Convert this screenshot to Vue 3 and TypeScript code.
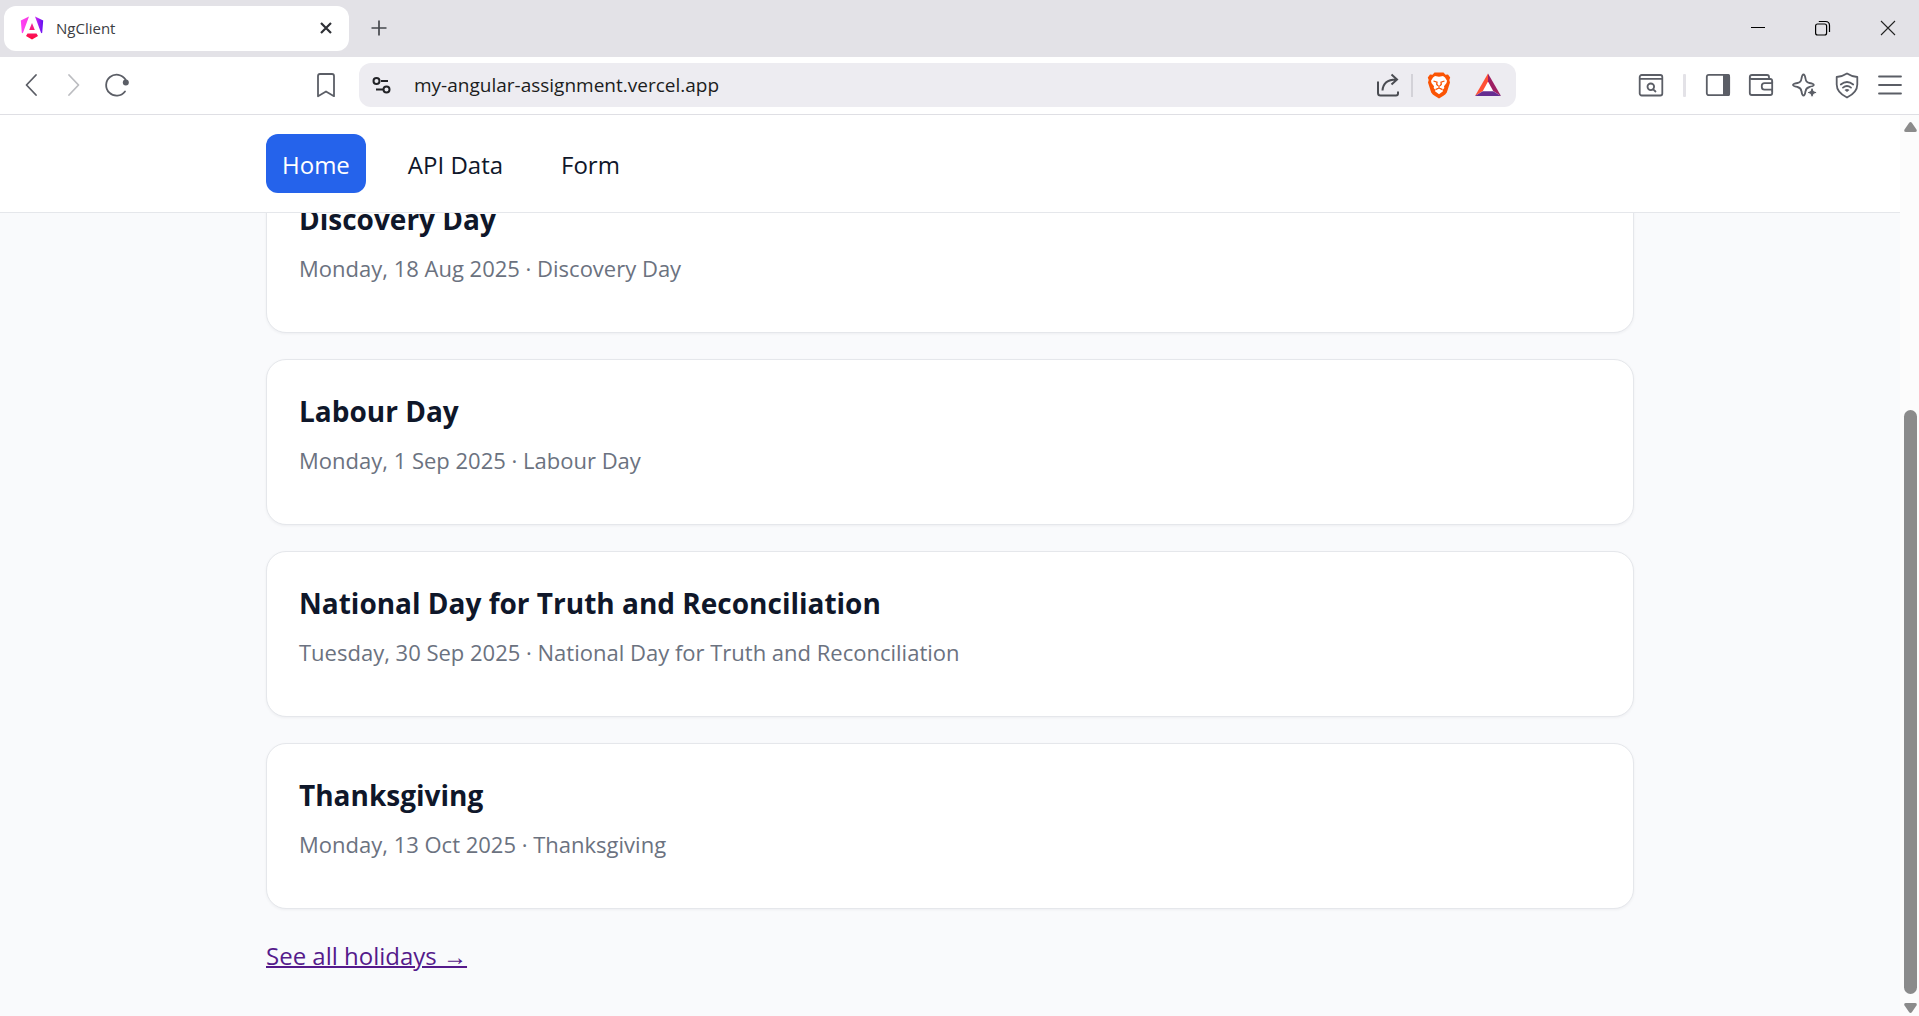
<script setup lang="ts">
import { ref } from 'vue'

interface Holiday {
  name: string
  date: string
  note: string
}

interface NavLink {
  label: string
  href: string
}

const address = ref('my-angular-assignment.vercel.app')
const current = ref('Home')

const links: NavLink[] = [
  { label: 'Home', href: '#home' },
  { label: 'API Data', href: '#api-data' },
  { label: 'Form', href: '#form' },
]

const holidays: Holiday[] = [
  { name: 'Discovery Day', date: 'Monday, 18 Aug 2025', note: 'Discovery Day' },
  { name: 'Labour Day', date: 'Monday, 1 Sep 2025', note: 'Labour Day' },
  {
    name: 'National Day for Truth and Reconciliation',
    date: 'Tuesday, 30 Sep 2025',
    note: 'National Day for Truth and Reconciliation',
  },
  { name: 'Thanksgiving', date: 'Monday, 13 Oct 2025', note: 'Thanksgiving' },
]
</script>

<template>
  <div class="browser">
    <div class="tab-strip">
      <div class="tab">
        <svg class="favicon" viewBox="0 0 24 24" aria-hidden="true">
          <defs>
            <linearGradient id="ng-side" x1="0" y1="0" x2="1" y2="0">
              <stop offset="0" stop-color="#ff41f8" />
              <stop offset="0.45" stop-color="#f43bd8" />
              <stop offset="0.75" stop-color="#b01cf5" />
              <stop offset="1" stop-color="#5c10f0" />
            </linearGradient>
            <linearGradient id="ng-base" x1="0" y1="0" x2="0" y2="1">
              <stop offset="0" stop-color="#f0279e" />
              <stop offset="1" stop-color="#ff0a3c" />
            </linearGradient>
          </defs>
          <path fill="url(#ng-side)" d="M9 0.500 2.800 17.200 1.800 16.800 0.800 4.500ZM15 0.500 23.200 4.500 22.200 16.800 21.200 17.200Z" />
          <path fill="url(#ng-base)" d="M12 7 14.800 14H9.200ZM7.500 17.500H16.500L18 20 12 23.600 6 20Z" />
        </svg>
        <span class="tab-title">NgClient</span>
        <button class="icon-btn small" type="button" aria-label="Close tab">
          <svg viewBox="0 0 20 20"><path d="M5 5 15 15M15 5 5 15" stroke="#2e3035" stroke-width="2.200" /></svg>
        </button>
      </div>
      <button class="icon-btn new-tab" type="button" aria-label="New tab">
        <svg viewBox="0 0 28 28"><path d="M14 6.500V21.500M6.500 14H21.500" stroke="#46484d" stroke-width="1.700" /></svg>
      </button>
      <div class="window-controls">
        <button class="icon-btn" type="button" aria-label="Minimize">
          <svg viewBox="0 0 28 28"><path d="M7 13.500H21" stroke="#000" stroke-width="1" /></svg>
        </button>
        <button class="icon-btn" type="button" aria-label="Restore">
          <svg viewBox="0 0 28 28" stroke="#000" stroke-width="1.200">
            <rect x="6.600" y="10" width="11" height="11" rx="2" />
            <path d="M9.800 7.500H16.500Q20.500 7.500 20.500 11.500V18" />
          </svg>
        </button>
        <button class="icon-btn" type="button" aria-label="Close window">
          <svg viewBox="0 0 28 28"><path d="M7 7 21 21M21 7 7 21" stroke="#222" stroke-width="1.100" /></svg>
        </button>
      </div>
    </div>

    <div class="toolbar">
      <button class="icon-btn" type="button" aria-label="Back">
        <svg viewBox="0 0 28 28"><path d="M19 4 9.500 14 19 24" /></svg>
      </button>
      <button class="icon-btn faded" type="button" aria-label="Forward">
        <svg viewBox="0 0 28 28"><path d="M9 4 18.500 14 9 24" /></svg>
      </button>
      <button class="icon-btn" type="button" aria-label="Reload">
        <svg viewBox="0 0 28 28">
          <path d="M22 20.500A10.500 10.500 0 1 1 22.500 8.500L23 11" />
          <circle cx="22.800" cy="11.400" r="3" fill="#5b5e66" stroke="none" />
        </svg>
      </button>
      <button class="icon-btn bookmark" type="button" aria-label="Bookmark this page">
        <svg viewBox="0 0 28 28"><path d="M8 3H20Q22 3 22 5V25.200L14 20.500 6 25.200V5Q6 3 8 3Z" /></svg>
      </button>

      <div class="omnibox">
        <button class="icon-btn" type="button" aria-label="Site information">
          <svg viewBox="0 0 28 28" stroke="#222327">
            <circle cx="9.500" cy="10" r="3" />
            <path d="M14 10H21M9 18.500H16" />
            <circle cx="19.500" cy="18.500" r="3" />
          </svg>
        </button>
        <input v-model="address" class="address" type="text" aria-label="Address" spellcheck="false" />
        <button class="icon-btn" type="button" aria-label="Share">
          <svg viewBox="0 0 28 28" stroke="#4a4c52">
            <path d="M4 10.500V22Q4 24.500 6.500 24.500H22Q24 24.500 24 22.500V20.500" />
            <path d="M8.500 19.500C9 12.500 13.500 8.500 22 8.500M17.500 3.500 23 8.500 17.500 13.500" />
          </svg>
        </button>
        <span class="omni-divider"></span>
        <button class="icon-btn brave" type="button" aria-label="Brave Shields">
          <svg viewBox="0 0 28 28" stroke="none">
            <path fill="#fb5404" d="M9.500 1.500H18.500L20.500 3.800 23 3.600 25.200 6.500 24.300 9 25 11.500 21.800 21.500Q20.500 23.500 18 25L14 27.500 10 25Q7.500 23.500 6.200 21.500L3 11.500 3.700 9 2.800 6.500 5 3.600 7.500 3.800Z" />
            <path fill="#fff" d="M10 5 14 5.700 18 5 20 6.500 22 9.800 21.500 12 19 15.300 19.300 17 17.600 19 18 20.300 14 23.300 10 20.300 10.400 19 8.700 17 9 15.300 6.500 12 6 9.800 8 6.500Z" />
            <path fill="none" stroke="#fb5404" stroke-width="1.300" d="M8.500 10 12 11.200 11.700 13.200 13 14.800M19.500 10 16 11.200 16.300 13.200 15 14.800M14 14.500V17M10.500 18.600 14 17 17.500 18.600" />
          </svg>
        </button>
        <button class="icon-btn" type="button" aria-label="Brave Rewards">
          <svg viewBox="0 0 28 28" stroke="none">
            <path fill="#fff" d="M14 9 21 21H7Z" />
            <path fill="#ff5035" d="M14 2.500V10.500L8.800 20 1 25Z" />
            <path fill="#9e1f63" d="M14 2.500 27 25 19.200 20 14 10.500Z" />
            <path fill="#662d91" d="M1 25 8.800 20.200H19.200L27 25Z" />
          </svg>
        </button>
      </div>

      <button class="icon-btn" type="button" aria-label="Search tabs">
        <svg viewBox="0 0 28 28">
          <rect x="2.700" y="4" width="22.600" height="20.500" rx="2" />
          <path d="M3 7.800H25" />
          <circle cx="13.800" cy="15.800" r="3.300" />
          <path d="M16.200 18.300 18.500 20.500" />
        </svg>
      </button>
      <span class="toolbar-divider"></span>
      <button class="icon-btn" type="button" aria-label="Sidebar">
        <svg viewBox="0 0 28 28">
          <rect x="2.800" y="3.800" width="22.400" height="20.400" rx="2" />
          <path fill="#5b5e66" stroke="none" d="M19 3H24Q26 3 26 5V23Q26 25 24 25H19Z" />
        </svg>
      </button>
      <button class="icon-btn" type="button" aria-label="Wallet">
        <svg viewBox="0 0 28 28">
          <path d="M25.200 11.500V10Q25.200 8 23.200 8H4.500Q2.800 8 2.800 6Q2.800 4 5 4H20Q22 4 22 6V8M2.800 6V22Q2.800 24 4.800 24H23.200Q25.200 24 25.200 22V20" />
          <path d="M25.200 12.200H17.500Q14.800 12.200 14.800 14.800V16Q14.800 18.700 17.500 18.700H25.200ZM25.200 11V20" />
        </svg>
      </button>
      <button class="icon-btn" type="button" aria-label="Leo AI">
        <svg viewBox="0 0 28 28">
          <path d="M13.500 3.500C14.500 3.500 15 4.500 15.500 7.500Q16 11.500 19.500 12C22.500 12.500 23.800 13 23.800 14C23.800 15 22.500 15.300 19.500 16Q16 16.800 15.500 20.500C15 23.500 14.500 24.500 13.500 24.500C12.500 24.500 12 23.500 11.500 20.500Q11 16.800 7.500 16C4.500 15.300 3 15 3 14C3 13 4.500 12.500 7.500 12Q11 11.500 11.500 7.500C12 4.500 12.500 3.500 13.500 3.500Z" />
          <path fill="#5b5e66" stroke="#fff" stroke-width="1.200" d="M22 16.700Q23.300 16.700 23.800 19.500L24.300 19.900Q27 20.300 27 21.500Q27 22.600 24.300 23.200L23.800 23.700Q23.300 26.300 22 26.300Q20.800 26.300 20.300 23.700L19.800 23.200Q17.200 22.600 17.200 21.500Q17.200 20.300 19.800 19.900L20.300 19.500Q20.800 16.700 22 16.700Z" />
        </svg>
      </button>
      <button class="icon-btn" type="button" aria-label="VPN">
        <svg viewBox="0 0 28 28">
          <path d="M14 2.500Q18.500 5.500 24.300 6V13.500Q24.300 21.500 14 26.500Q3.700 21.500 3.700 13.500V6Q9.500 5.500 14 2.500Z" />
          <path d="M7.800 13.500Q14 8.500 20.200 13.500M10 16.600Q14 13.300 18 16.600" />
          <path fill="#5b5e66" stroke="none" d="M11.500 19Q14 17 16.500 19L14 21Z" />
        </svg>
      </button>
      <button class="icon-btn" type="button" aria-label="Menu">
        <svg viewBox="0 0 28 28"><path d="M3 5.500H25M3 14H25M3 22.500H25" /></svg>
      </button>
    </div>

    <div class="viewport">
      <div class="page">
        <header class="site-header">
          <nav class="container nav" aria-label="Main">
            <a
              v-for="link in links"
              :key="link.label"
              :href="link.href"
              class="nav-link"
              :class="{ active: current === link.label }"
              @click="current = link.label"
            >{{ link.label }}</a>
          </nav>
        </header>

        <main class="content">
          <div class="container list">
            <article v-for="holiday in holidays" :key="holiday.name" class="card">
              <h3 class="card-title">{{ holiday.name }}</h3>
              <p class="card-meta">{{ holiday.date }} · {{ holiday.note }}</p>
            </article>
            <a class="see-all" href="#holidays">See all holidays →</a>
          </div>
        </main>
      </div>

      <div class="scrollbar" aria-hidden="true">
        <svg class="arrow" viewBox="0 0 13 10"><path d="M5 1Q6.500-1 8 1L12.500 7.500Q13.500 10 11 10H2Q-0.500 10 0.500 7.500Z" /></svg>
        <div class="track"><div class="thumb"></div></div>
        <svg class="arrow" viewBox="0 0 13 10"><path d="M5 9Q6.500 11 8 9L12.500 2.500Q13.500 0 11 0H2Q-0.500 0 0.500 2.500Z" /></svg>
      </div>
    </div>
  </div>
</template>

<style>
body {
  margin: 0;
}
</style>

<style scoped>
.browser {
  display: flex;
  flex-direction: column;
  height: 100vh;
  overflow: hidden;
  background: #fff;
  font-family: "Open Sans", "Noto Sans", sans-serif;
  color: #0f172a;
}

.browser * {
  box-sizing: border-box;
}

.icon-btn {
  flex: none;
  display: block;
  width: 28px;
  height: 28px;
  padding: 0;
  border: 0;
  background: none;
}

.icon-btn svg {
  display: block;
  width: 100%;
  height: 100%;
  fill: none;
}

.tab-strip {
  flex: none;
  display: flex;
  align-items: center;
  height: 57px;
  padding: 0 17px 1px 4px;
  background: #e3e2e7;
}

.tab {
  display: flex;
  align-items: center;
  width: 345px;
  height: 45px;
  padding: 0 13px 0 16px;
  border-radius: 12px;
  background: #fff;
}

.favicon {
  width: 24px;
  height: 24px;
}

.tab-title {
  flex: 1;
  margin-left: 12px;
  font-size: 15px;
  line-height: 20px;
  color: #3b3d42;
}

.small {
  width: 20px;
  height: 20px;
}

.new-tab {
  margin-left: 16px;
}

.window-controls {
  display: flex;
  gap: 37px;
  margin-left: auto;
}

.toolbar {
  flex: none;
  display: flex;
  align-items: center;
  gap: 15px;
  height: 58px;
  padding: 0 15px 1px 17px;
  border-bottom: 1px solid #dfdfe4;
}

.toolbar > .icon-btn svg {
  stroke: #5b5e66;
  stroke-width: 1.8;
  stroke-linecap: round;
  stroke-linejoin: round;
}

.toolbar > .faded svg {
  stroke: #bcbdc1;
}

.bookmark {
  margin-left: 166px;
}

.omnibox {
  flex: 1;
  display: flex;
  align-items: center;
  min-width: 0;
  height: 44px;
  margin: 0 106px 0 4px;
  padding: 0 14px 0 8px;
  border-radius: 12px;
  background: #edecf1;
}

.omnibox svg {
  stroke-width: 2;
}

.address {
  flex: 1;
  min-width: 0;
  margin: 0 19px;
  padding: 0;
  border: 0;
  outline: 0;
  background: none;
  font-family: inherit;
  font-size: 19px;
  line-height: 28px;
  color: #1b1c20;
}

.omni-divider {
  width: 2px;
  height: 23px;
  margin: 0 12px 0 9px;
  background: #d3d2d8;
}

.brave {
  margin-right: 21px;
}

.toolbar-divider {
  width: 3px;
  height: 23px;
  margin: 0 3px;
  border-radius: 1px;
  background: #e3e2e7;
}

.viewport {
  flex: 1;
  display: flex;
  min-height: 0;
}

.page {
  flex: 1;
  display: flex;
  flex-direction: column;
  min-width: 0;
  background: #f9fafc;
}

.container {
  width: 72%;
  margin: 0 auto;
}

.site-header {
  flex: none;
  padding: 19px 0;
  border-bottom: 1px solid #e5e7eb;
  background: #fff;
}

.nav {
  display: flex;
  gap: 26px;
}

.nav-link {
  padding: 13px 16px 11px;
  border-radius: 12px;
  font-size: 24px;
  line-height: 35px;
  color: #0f172a;
  text-decoration: none;
}

.nav-link.active {
  background: #2563eb;
  color: #fff;
}

/* The list is scrolled to its end, so it hangs from the bottom edge. */
.content {
  flex: 1;
  display: flex;
  flex-direction: column;
  justify-content: flex-end;
  min-height: 0;
  overflow: hidden;
  padding-bottom: 39px;
}

.list {
  display: flex;
  flex-direction: column;
  align-items: flex-start;
  gap: 26px;
}

.card {
  width: 100%;
  height: 166px;
  padding: 31px 32px;
  border: 1px solid #e5e7eb;
  border-radius: 20px;
  background: #fff;
  box-shadow: 0 1px 3px rgba(15, 23, 42, 0.05);
}

.card-title {
  margin: 0 0 13px;
  font-size: 28px;
  font-weight: 700;
  line-height: 40px;
}

.card-meta {
  margin: 0;
  font-size: 22px;
  line-height: 32px;
  color: #6b7280;
}

.see-all {
  font-size: 24px;
  line-height: 42px;
  color: #551a8b;
  text-decoration-thickness: 2px;
}

.scrollbar {
  flex: none;
  display: flex;
  flex-direction: column;
  align-items: center;
  width: 19px;
  padding: 7px 0 3px 2px;
  background: #fcfcfc;
}

.arrow {
  flex: none;
  width: 13px;
  height: 10px;
  fill: #8b8b8b;
}

.track {
  flex: 1;
  display: flex;
  align-items: flex-end;
  padding: 9px 0;
}

.thumb {
  width: 13px;
  height: 68.5%;
  border-radius: 7px;
  background: #8b8b8b;
}
</style>
